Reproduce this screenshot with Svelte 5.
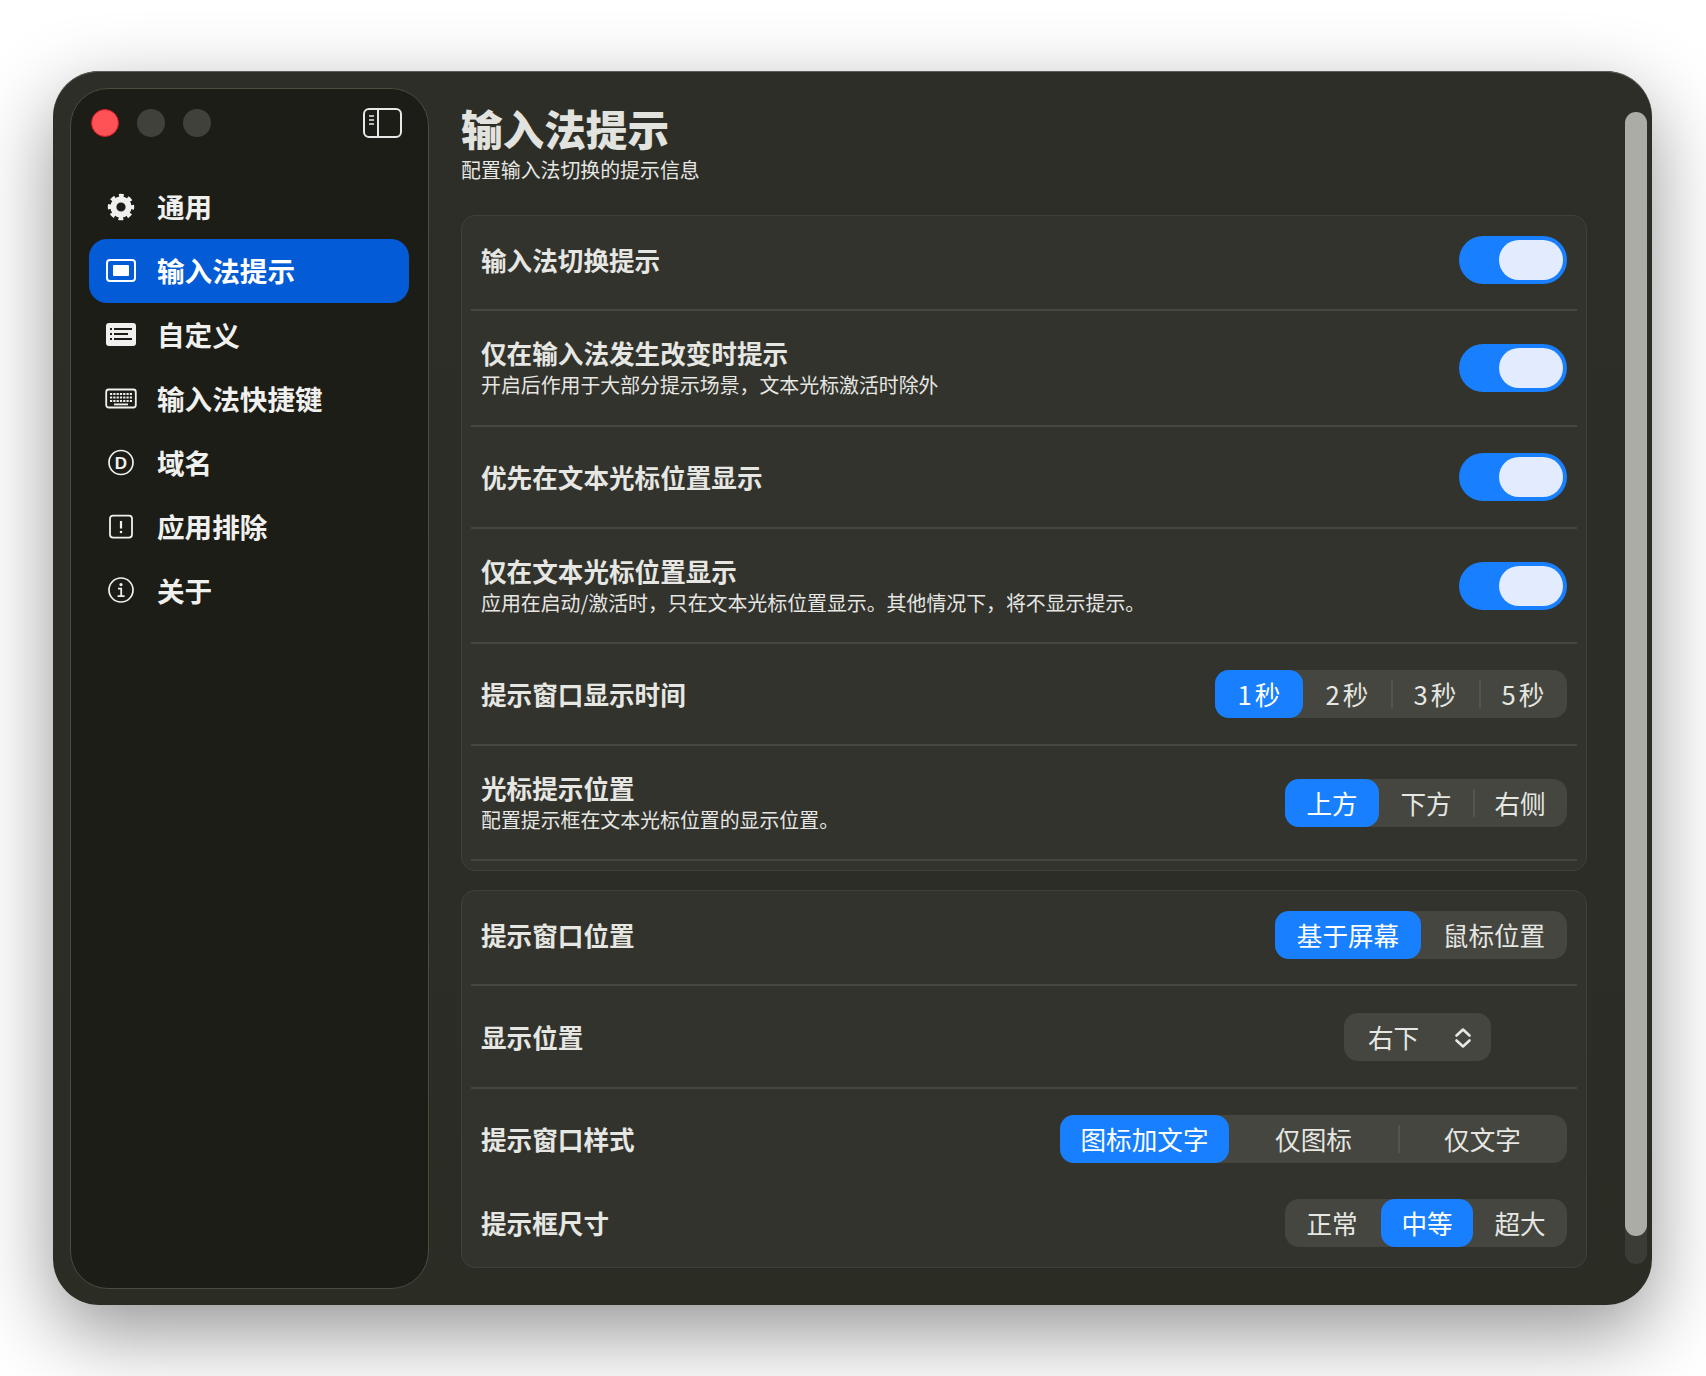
<script lang="ts">
  const nav = [
    { id: 'gear', label: '通用' },
    { id: 'input', label: '输入法提示', active: true },
    { id: 'list', label: '自定义' },
    { id: 'keyboard', label: '输入法快捷键' },
    { id: 'domain', label: '域名' },
    { id: 'exclude', label: '应用排除' },
    { id: 'info', label: '关于' }
  ];

  const hintRows = [
    { label: '输入法切换提示', toggle: true },
    { label: '仅在输入法发生改变时提示', sub: '开启后作用于大部分提示场景，文本光标激活时除外', toggle: true },
    { label: '优先在文本光标位置显示', toggle: true },
    { label: '仅在文本光标位置显示', sub: '应用在启动/激活时，只在文本光标位置显示。其他情况下，将不显示提示。', toggle: true },
    { label: '提示窗口显示时间', seg: ['1秒', '2秒', '3秒', '5秒'], on: 0, width: 88, digits: true },
    { label: '光标提示位置', sub: '配置提示框在文本光标位置的显示位置。', seg: ['上方', '下方', '右侧'], on: 0, width: 94 }
  ];

  const windowRows = [
    { label: '提示窗口位置', seg: ['基于屏幕', '鼠标位置'], on: 0, width: 146 },
    { label: '显示位置', select: '右下' },
    { label: '提示窗口样式', seg: ['图标加文字', '仅图标', '仅文字'], on: 0, width: 169 },
    { label: '提示框尺寸', seg: ['正常', '中等', '超大'], on: 1, width: 94 }
  ];

  // no divider next to the selected item or on the far side of it
  function showDivider(i: number, on: number) {
    return i > 0 && i !== on && i !== on + 1;
  }
</script>

{#snippet rowContent(row)}
  <div class="text">
    <div class="label">{row.label}</div>
    {#if row.sub}<div class="sub">{row.sub}</div>{/if}
  </div>
  {#if row.toggle}
    <div class="toggle"><span class="knob"></span></div>
  {:else if row.seg}
    <div class="seg" class:digits={row.digits} style="grid-auto-columns: {row.width}px">
      {#each row.seg as item, i}
        <div class="seg-item" class:on={i === row.on} class:divided={showDivider(i, row.on)}><span>{item}</span></div>
      {/each}
    </div>
  {:else if row.select}
    <div class="select">
      <span>{row.select}</span>
      <svg class="chevrons" width="18" height="22" viewBox="0 0 18 22" fill="none" stroke="currentColor" stroke-width="2.6" stroke-linecap="round" stroke-linejoin="round">
        <path d="M2.5 8.5L9 2.5l6.5 6" />
        <path d="M2.5 13.5L9 19.5l6.5-6" />
      </svg>
    </div>
  {/if}
{/snippet}

<div class="shell">
  <div class="window">
    <aside class="sidebar">
      <div class="titlebar">
        <div class="lights">
          <span class="light red"></span>
          <span class="light"></span>
          <span class="light"></span>
        </div>
        <svg width="39" height="30" viewBox="0 0 39 30" fill="none" stroke="#e8e8e6" stroke-width="2">
          <rect x="1" y="1" width="37" height="28" rx="5" />
          <path d="M15 1v28" />
          <path d="M6 8h5M6 12h5M6 16h5" stroke-width="1.6" />
        </svg>
      </div>
      <nav>
        {#each nav as item}
          <div class="nav-item" class:active={item.active}>
            <svg class="nav-icon" width="32" height="32" viewBox="0 0 32 32" fill="none" stroke="currentColor" stroke-width="2">
              {#if item.id === 'gear'}
                <circle cx="16" cy="16" r="7.6" stroke-width="6" />
                <circle cx="16" cy="16" r="11" stroke-width="4.4" stroke-dasharray="4.6 4.04" stroke-dashoffset="2.3" />
              {:else if item.id === 'input'}
                <rect x="2" y="5" width="28" height="21" rx="3" />
                <rect x="8" y="10" width="16" height="11" rx="1" fill="currentColor" stroke="none" />
              {:else if item.id === 'list'}
                <rect x="1" y="4" width="30" height="23" rx="3" fill="currentColor" stroke="none" />
                <path d="M5 10h2M9 10h18M5 15h2M9 15h14M5 20h2M9 20h18" stroke="#1c1d16" stroke-width="1.8" />
              {:else if item.id === 'keyboard'}
                <rect x="1.2" y="6.5" width="29.6" height="18" rx="2.5" stroke-width="1.8" />
                <path d="M5 11h22M5 14.5h22M5 18h22" stroke-width="2.2" stroke-dasharray="2.2 1.1" />
                <path d="M9 21.4h14" stroke-width="1.8" />
              {:else if item.id === 'domain'}
                <circle cx="16" cy="15.5" r="12" stroke-width="1.7" />
                <text class="icon-letter" x="16" y="21.6" text-anchor="middle" fill="currentColor" stroke="none">D</text>
              {:else if item.id === 'exclude'}
                <rect x="5" y="4.6" width="22" height="22" rx="3" stroke-width="1.8" />
                <path d="M16 10v7.5" stroke-width="2.2" />
                <circle cx="16" cy="21" r="1.3" fill="currentColor" stroke="none" />
              {:else if item.id === 'info'}
                <circle cx="16" cy="15" r="12" stroke-width="1.7" />
                <circle cx="16" cy="9.6" r="1.6" fill="currentColor" stroke="none" />
                <path d="M13 13.6h3.2v7.6M12.6 21.2h7" stroke-width="1.8" />
              {/if}
            </svg>
            <span class="nav-label">{item.label}</span>
          </div>
        {/each}
      </nav>
    </aside>

    <main class="content">
      <h1>输入法提示</h1>
      <p class="lead">配置输入法切换的提示信息</p>

      <section class="card first">
        {#each hintRows as row}
          <div class="row" class:double={row.sub}>{@render rowContent(row)}</div>
        {/each}
      </section>

      <section class="card second">
        {#each windowRows as row}
          <div class="row">{@render rowContent(row)}</div>
        {/each}
      </section>
    </main>

    <div class="scrollbar"><div class="thumb"></div></div>
  </div>
</div>

<style>
  :global(body) {
    margin: 0;
    background: #fff;
  }

  .shell {
    height: 1376px;
    box-sizing: border-box;
    padding: 71px 54px 71px 53px;
    overflow: hidden;
    font-family: "Noto Sans CJK SC", "Noto Sans", sans-serif;
  }

  .window {
    display: flex;
    height: 1234px;
    border-radius: 46px;
    background: linear-gradient(180deg, #2d2e27, #2b2c24);
    box-shadow:
      0 1px 0 0 #5c5d57 inset,
      0 28px 80px rgba(0, 0, 0, 0.42);
  }

  .sidebar {
    flex: none;
    box-sizing: border-box;
    width: 358.5px;
    margin: 17px 0 16px 17px;
    padding: 19px 19px 0 18px;
    border: 1.5px solid #4a4c3e;
    border-radius: 38px;
    background: #1c1d16;
  }

  .titlebar {
    display: flex;
    align-items: center;
    justify-content: space-between;
    margin: 0 7px 37px 2px;
  }

  .lights {
    display: flex;
    gap: 18px;
  }

  .light {
    width: 28px;
    height: 28px;
    border-radius: 50%;
    background: #41413c;
  }

  .light.red {
    box-sizing: border-box;
    border: 1px solid #d01a24;
    background: #ff5257;
  }

  .nav-item {
    display: flex;
    align-items: center;
    gap: 20px;
    height: 64px;
    padding-left: 16px;
    border-radius: 18px;
    color: #f0f0ee;
    font-size: 27.6px;
    font-weight: 700;
  }

  .nav-item.active {
    background: #045bd6;
    color: #fff;
  }

  .nav-icon {
    flex: none;
  }

  .nav-label {
    padding-bottom: 2px;
  }

  .icon-letter {
    font-family: "Liberation Sans", sans-serif;
    font-size: 17px;
  }

  .content {
    flex: none;
    width: 1126px;
    margin-left: 32.5px;
    padding-top: 35px;
    color: #e6e6e3;
  }

  h1 {
    margin: 0;
    font-size: 41.6px;
    line-height: 44px;
    font-weight: 900;
    color: #e2e2df;
  }

  .lead {
    margin: 6px 0 0;
    font-size: 19.9px;
    line-height: 28px;
  }

  .card {
    padding: 0 9px 9px;
    border: 1px solid #3f403a;
    border-radius: 14px;
    background: #32332c;
  }

  .card.first {
    margin-top: 31px;
  }

  .card.second {
    margin-top: 19px;
    padding-bottom: 11px;
  }

  .row {
    display: flex;
    align-items: center;
    justify-content: space-between;
    box-sizing: border-box;
    height: 102px;
    padding: 0 10px;
    border-bottom: 2px solid #46473f;
  }

  .row.double {
    height: 116px;
  }

  .row.double:nth-child(4) {
    height: 115px;
  }

  .row.double:last-child {
    height: 115px;
  }

  .row:first-child {
    height: 95px;
    padding-bottom: 5px;
  }

  .second .row:first-child {
    padding-bottom: 6px;
  }

  .second .row:nth-child(2) {
    height: 103px;
  }

  .second .row:nth-child(3) {
    height: 101px;
    padding-bottom: 2px;
    border-bottom: 0;
  }

  .second .row:last-child {
    height: 66px;
    border-bottom: 0;
  }

  .label {
    font-size: 25.6px;
    line-height: 32px;
    font-weight: 700;
  }

  .sub {
    margin-top: 2px;
    font-size: 19.9px;
    line-height: 28px;
  }

  .toggle {
    display: flex;
    justify-content: flex-end;
    box-sizing: border-box;
    width: 108px;
    height: 48px;
    padding: 4px;
    border-radius: 24px;
    background: #187fff;
  }

  .knob {
    width: 64px;
    height: 40px;
    border-radius: 20px;
    background: #e3ebfe;
  }

  .seg {
    display: grid;
    grid-auto-flow: column;
    height: 48px;
    border-radius: 14px;
    background: #44463f;
    font-size: 25.6px;
    line-height: 48px;
  }

  .seg-item {
    position: relative;
    border-radius: 14px;
    text-align: center;
    white-space: nowrap;
  }

  .seg-item.on {
    background: #187fff;
    color: #fff;
  }

  /* a selected item in the middle sits slightly inset from its left neighbour */
  .seg-item.on:not(:first-child) {
    margin-left: 2px;
  }

  .seg-item.divided::before {
    content: "";
    position: absolute;
    left: 0;
    top: 10px;
    bottom: 10px;
    width: 2px;
    background: #53554e;
  }

  .seg.digits .seg-item {
    padding-left: 3px;
    letter-spacing: 3px;
  }

  .select {
    display: flex;
    align-items: center;
    justify-content: space-between;
    box-sizing: border-box;
    width: 147px;
    height: 48px;
    margin-right: 76px;
    padding: 0 19px 0 24px;
    border-radius: 14px;
    background: #44463f;
    font-size: 25.6px;
  }

  .chevrons {
    margin-top: 3px;
  }

  .scrollbar {
    flex: none;
    width: 22px;
    height: 1152px;
    margin: 41px 0 0 38px;
    border-radius: 11px;
    background: #3a3c35;
  }

  .thumb {
    height: 1124px;
    border-radius: 11px;
    background: #abaca6;
  }
</style>
